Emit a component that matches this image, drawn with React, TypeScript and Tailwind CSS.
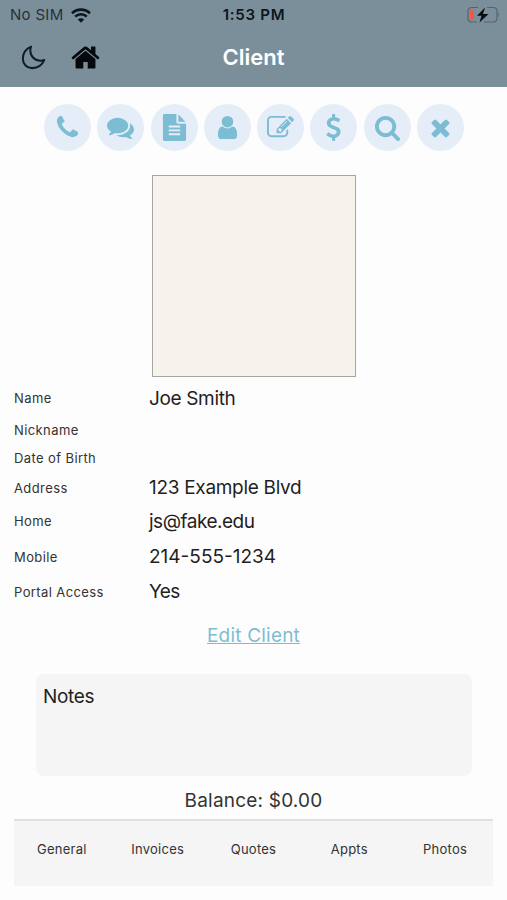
import React from "react";

interface GlyphProps {
  d: string;
  className?: string;
}

const Glyph: React.FC<GlyphProps> = ({ d, className }) => (
  <svg viewBox="0 0 1792 1792" fill="currentColor" className={className}>
    <path d={d} />
  </svg>
);

const homePath =
  "M1472 992v480q0 26-19 45t-45 19h-384v-384h-256v384h-384q-26 0-45-19t-19-45v-480q0-1 .5-3t.5-3l575-474 575 474q1 2 1 6zm223-69l-62 74q-8 9-21 11h-3q-13 0-21-7l-692-577-692 577q-12 8-24 7-13-2-21-11l-62-74q-8-10-7-23.5t11-21.5l719-599q32-26 76-26t76 26l244 204v-195q0-14 9-23t23-9h192q14 0 23 9t9 23v408l219 182q10 8 11 21.5t-7 23.5z";

const actions = [
  {
    name: "Call",
    d: "M1600 1240q0 27-10 70.5t-21 68.5q-21 50-122 106-94 51-186 51-27 0-53-3.5t-57.5-12.5-47-14.5-55.5-20.5-49-18q-98-35-175-83-127-79-264-216t-216-264q-48-77-83-175-3-9-18-49t-20.5-55.5-14.5-47-12.5-57.5-3.5-53q0-92 51-186 56-101 106-122 25-11 68.5-21t70.5-10q14 0 21 3 18 6 53 76 11 19 30 54t35 63.5 31 53.5q3 4 17.5 25t21.5 35.5 7 28.5q0 20-28.5 50t-62 55-62 53-28.5 46q0 9 5 22.5t8.5 20.5 14 24 11.5 19q76 137 174 235t235 174q2 1 19 11.5t24 14 20.5 8.5 22.5 5q18 0 46-28.5t53-62 55-62 50-28.5q14 0 28.5 7t35.5 21.5 25 17.5q25 15 53.5 31t63.5 35 54 30q70 35 76 53 3 7 3 21z",
  },
  {
    name: "Message",
    d: "M1408 768q0 139-94 257t-256.5 186.5-353.5 68.5q-86 0-176-16-124 88-278 128-36 9-86 16h-3q-11 0-20.5-8t-11.5-21q-1-3-1-6.5t.5-6.5 2-6l2.5-5 3.5-5.5 4-5 4.500-5 4-4.500q5-6 23-25t26-29.500 22.500-29 25-38.500 20.500-44q-124-72-195-177t-71-224q0-139 94-257t256.500-186.500 353.500-68.500 353.500 68.500 256.500 186.500 94 257zm384 256q0 120-71 224.500t-195 176.500q10 24 20.500 44t25 38.500 22.500 29 26 29.500 23 25q1 1 4 4.500t4.500 5 4 5 3.500 5.500l2.500 5 2 6 .5 6.500-1 6.500q-3 14-13 22t-22 7q-50-7-86-16-154-40-278-128-90 16-176 16-271 0-472-132 58 4 88 4 161 0 309-45t264-129q125-92 192-212t67-254q0-77-23-152 129 71 204 178t75 230z",
  },
  {
    name: "Document",
    d: "M1596 476q14 14 28 36h-472v-472q22 14 36 28zm-476 164h544v1056q0 40-28 68t-68 28h-1344q-40 0-68-28t-28-68v-1600q0-40 28-68t68-28h800v544q0 40 28 68t68 28zm160 736v-64q0-14-9-23t-23-9h-704q-14 0-23 9t-9 23v64q0 14 9 23t23 9h704q14 0 23-9t9-23zm0-256v-64q0-14-9-23t-23-9h-704q-14 0-23 9t-9 23v64q0 14 9 23t23 9h704q14 0 23-9t9-23zm0-256v-64q0-14-9-23t-23-9h-704q-14 0-23 9t-9 23v64q0 14 9 23t23 9h704q14 0 23-9t9-23z",
  },
  {
    name: "Profile",
    d: "M1536 1399q0 109-62.5 187t-150.5 78h-854q-88 0-150.5-78t-62.5-187q0-85 8.5-160.5t31.5-152 58.5-131 94-89 134.5-34.5q131 128 313 128t313-128q76 0 134.5 34.5t94 89 58.5 131 31.5 152 8.5 160.5zm-256-887q0 159-112.5 271.5t-271.5 112.5-271.5-112.5-112.5-271.5 112.5-271.5 271.5-112.5 271.5 112.5 112.5 271.5z",
  },
  {
    name: "Edit",
    d: "M888 1184l116-116-152-152-116 116v56h96v96h56zm440-720q-16-16-33 1l-350 350q-17 17-1 33t33-1l350-350q17-17 1-33zm80 594v190q0 119-84.5 203.5t-203.5 84.5h-832q-119 0-203.5-84.5t-84.5-203.5v-832q0-119 84.5-203.5t203.5-84.5h832q63 0 117 25 15 7 18 23 3 17-9 29l-49 49q-14 14-32 8-23-6-45-6h-832q-66 0-113 47t-47 113v832q0 66 47 113t113 47h832q66 0 113-47t47-113v-126q0-13 9-22l64-64q15-15 35-7t20 29zm-96-738l288 288-672 672h-288v-288zm444 132l-92 92-288-288 92-92q28-28 68-28t68 28l152 152q28 28 28 68t-28 68z",
  },
  {
    name: "Payment",
    d: "M1362 1185q0 153-99.5 263.5t-258.5 136.5v175q0 14-9 23t-23 9h-135q-13 0-22.5-9.5t-9.5-22.5v-175q-66-9-127.5-31t-101.5-44.5-74-48-46.5-37.5-17.5-18q-17-21-2-41l103-135q7-10 23-12 15-2 24 9l2 2q113 99 243 125 37 8 74 8 81 0 142.5-43t61.5-122q0-28-15-53t-33.5-42-58.5-37.5-66-32-80-32.5q-39-16-61.5-25t-61.5-26.5-62.5-31-56.5-35.5-53.5-42.5-43.5-49-35.5-58-21-66.5-8.5-78q0-138 98-242t255-134v-180q0-13 9.5-22.5t22.5-9.5h135q14 0 23 9t9 23v176q57 6 110.5 23t87 33.5 63.5 37.5 39 29 15 14q17 18 5 38l-81 146q-8 15-23 16-14 3-27-7-3-3-14.5-12t-39-26.5-58.5-32-74.5-26-85.5-11.5q-95 0-155 43t-60 111q0 26 8.5 48t29.5 41.5 39.5 33 56 31 60.5 27 70 27.5q53 20 81 31.5t76 35 75.5 42.5 62 50 53 63.5 31.5 76.5 13 94z",
  },
  {
    name: "Search",
    d: "M1216 832q0-185-131.5-316.5t-316.5-131.5-316.5 131.5-131.5 316.5 131.5 316.5 316.5 131.5 316.5-131.5 131.5-316.5zm512 832q0 52-38 90t-90 38q-54 0-90-38l-343-342q-179 124-399 124-143 0-273.5-55.5t-225-150-150-225-55.5-273.5 55.5-273.5 150-225 225-150 273.5-55.5 273.5 55.5 225 150 150 225 55.5 273.5q0 220-124 399l343 343q37 37 37 90z",
  },
  {
    name: "Close",
    d: "M1490 1322q0 40-28 68l-136 136q-28 28-68 28t-68-28l-294-294-294 294q-28 28-68 28t-68-28l-136-136q-28-28-28-68t28-68l294-294-294-294q-28-28-28-68t28-68l136-136q28-28 68-28t68 28l294 294 294-294q28-28 68-28t68 28l136 136q28 28 28 68t-28 68l-294 294 294 294q28 28 28 68z",
  },
];

const fields = [
  { label: "Name", value: "Joe Smith", row: "h-[34px]", text: "tracking-[-0.35px]" },
  { label: "Nickname", value: "", row: "h-[29px]", text: "" },
  { label: "Date of Birth", value: "", row: "h-[28px]", text: "" },
  { label: "Address", value: "123 Example Blvd", row: "h-[31px]", text: "tracking-[-0.3px]" },
  { label: "Home", value: "js@fake.edu", row: "h-[36px]", text: "tracking-[-0.5px]" },
  { label: "Mobile", value: "214-555-1234", row: "h-[35px]", text: "" },
  { label: "Portal Access", value: "Yes", row: "h-[35px]", text: "tracking-[-0.6px]" },
];

const tabs = ["General", "Invoices", "Quotes", "Appts", "Photos"];

const StatusBar = () => (
  <div className="grid h-[30px] grid-cols-3 items-center pl-[10px] pr-[7px] text-[15px] text-[#0c161d]">
    <div className="flex items-center gap-[7px]">
      <span className="tracking-[0.3px] text-[#25323a]">No SIM</span>
      <svg viewBox="0 0 20 15" className="h-[15px] w-5" fill="none" stroke="currentColor">
        <path d="M1 5.2a13 13 0 0 1 18 0" strokeWidth="2.8" />
        <path d="M4.2 8.6a8.3 8.3 0 0 1 11.6 0" strokeWidth="2.6" />
        <path d="M10 14.8 6.8 11.6a4.6 4.6 0 0 1 6.4 0z" fill="currentColor" stroke="none" />
      </svg>
    </div>
    <div className="-ml-[2px] whitespace-nowrap text-center font-semibold tracking-[0.75px]">1:53 PM</div>
    <svg viewBox="0 0 33 18" className="h-[18px] w-[33px] justify-self-end" fill="none">
      <path
        d="M11 1.5H4.5A3.5 3.5 0 0 0 1 5v7.5A3.5 3.5 0 0 0 4.5 16H10M20 1.5h6.5A3.5 3.5 0 0 1 30 5v7.500A3.500 3.500 0 0 1 26.500 16H17"
        stroke="#55646e"
        strokeWidth="1.2"
      />
      <path d="M31.300 6.500q2 2.200 0 4.400z" fill="#55646e" />
      <rect x="3" y="4" width="4" height="9.500" rx="1.200" fill="#f0574c" />
      <path d="M18 1.500 10 9.800h4.500l-2 6.800L21.500 8H16z" fill="#080d10" />
    </svg>
  </div>
);

export default function App() {
  return (
    <div className="flex h-[900px] w-[507px] flex-col overflow-hidden bg-[#fdfdfd] font-['Inter','Liberation_Sans',sans-serif] text-[#1f1f1f]">
      <header className="h-[87px] shrink-0 bg-[#7b8f9b]">
        <StatusBar />
        <div className="grid h-[55px] grid-cols-3 items-center">
          <div className="flex items-center gap-[23px] pl-5">
            <svg
              viewBox="0 0 512 512"
              fill="none"
              stroke="currentColor"
              strokeWidth="38"
              strokeLinejoin="round"
              className="size-[27px] text-[#101d26]"
            >
              <path d="M195 125c0-26.300 5.300-51.300 14.900-74.100C118.700 89 54.600 179.100 54.600 284.200c0 95.200 78.100 173.300 173.300 173.300 105.100 0 195.200-64.100 233.300-155.300-22.800 9.600-47.800 14.900-74.100 14.900-106.100 0-192.100-86-192.100-192.100z" />
            </svg>
            <Glyph d={homePath} className="size-[31px] text-[#05090c]" />
          </div>
          <h1 className="text-center text-[22px] font-semibold text-white">Client</h1>
        </div>
      </header>

      {/* Actions */}
      <div className="mt-[17px] flex justify-between pl-[44px] pr-[43px]">
        {actions.map((action) => (
          <button
            key={action.name}
            aria-label={action.name}
            className="flex size-[47px] items-center justify-center rounded-full bg-[#e5edf8] text-[#7dbdd3]"
          >
            <Glyph d={action.d} className="size-[27px]" />
          </button>
        ))}
      </div>

      {/* Photo */}
      <div className="ml-[152px] mt-[24px] h-[202px] w-[204px] border border-[#a5a5a5] bg-[#f6f3ed]" />

      {/* Details */}
      <dl className="mt-[5px] px-[14px]">
        {fields.map((field) => (
          <div key={field.label} className={`flex items-center ${field.row}`}>
            <dt className="w-[135px] text-[13px] tracking-[0.4px] text-[#333]">{field.label}</dt>
            <dd className={`text-[19px] ${field.text}`}>{field.value}</dd>
          </div>
        ))}
      </dl>

      <a className="mt-[12px] self-center text-[19px] leading-7 tracking-[0.2px] text-[#7dbdd3] underline">
        Edit Client
      </a>

      <div className="ml-9 mt-[24px] h-[102px] w-[436px] rounded-lg bg-[#f5f5f5] px-[7px] pt-[9px] text-[19px] leading-7 tracking-[-0.3px]">
        Notes
      </div>

      <p className="mt-[11px] text-center text-[19px] leading-7 tracking-[0.2px] text-[#333]">
        Balance: $0.00
      </p>

      <nav className="mx-[14px] mt-[4px] grid h-[67px] grid-cols-5 border-t-2 border-[#e0e0e0] bg-[#f5f5f5] pt-[18px] text-center text-[13px] leading-5 tracking-[0.25px] text-[#333]">
        {tabs.map((tab) => (
          <span key={tab}>{tab}</span>
        ))}
      </nav>
    </div>
  );
}
